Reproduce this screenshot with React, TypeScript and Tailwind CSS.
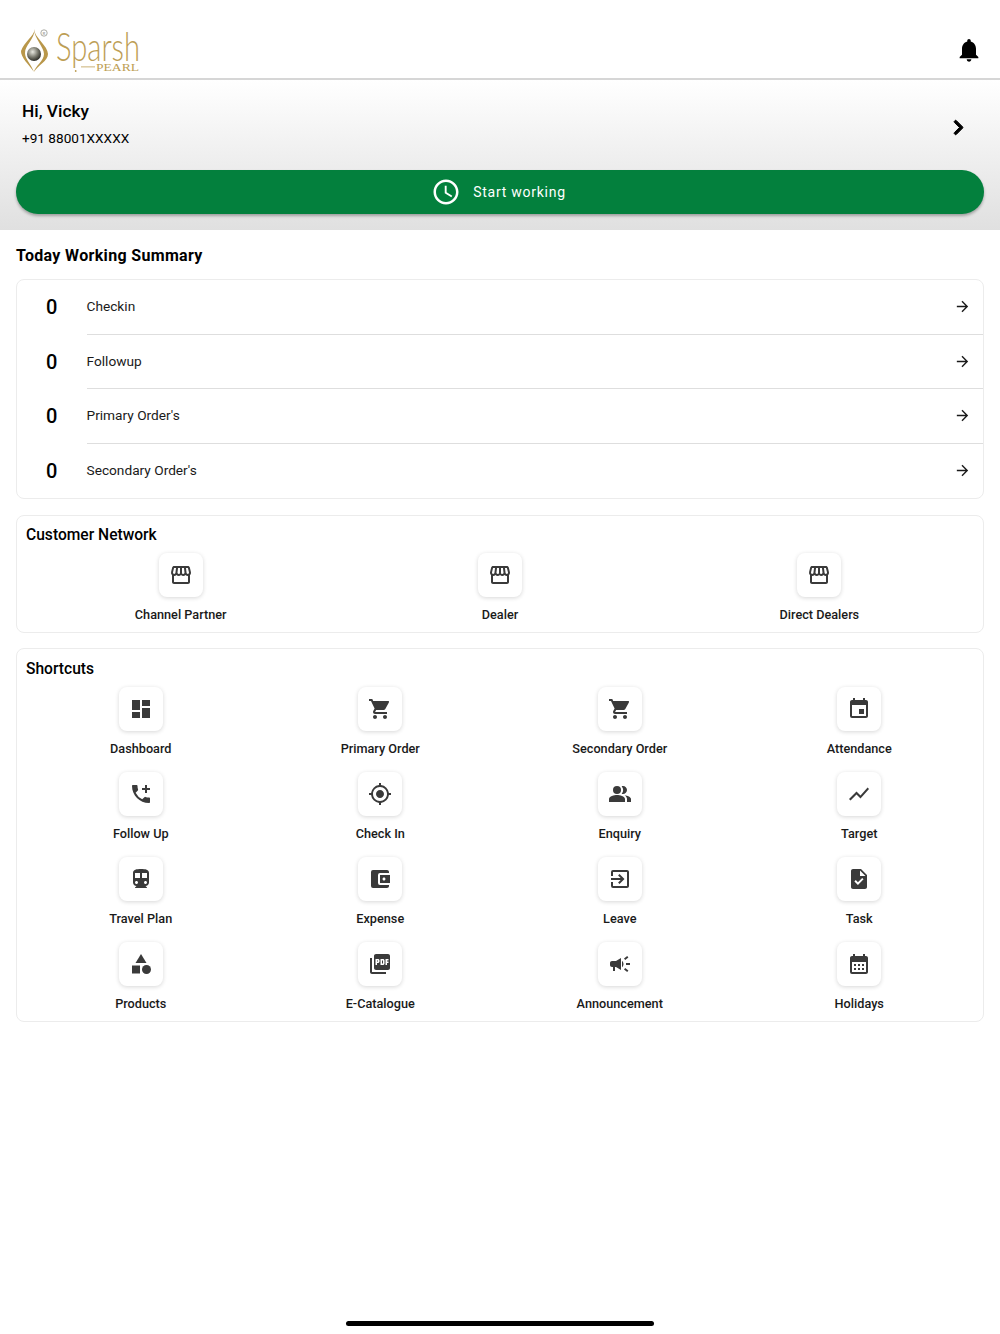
import React from 'react';
import { FaChevronRight } from 'react-icons/fa';
import {
  MdAccountBalanceWallet,
  MdAddIcCall,
  MdArrowForward,
  MdCalendarMonth,
  MdCampaign,
  MdCategory,
  MdDashboard,
  MdDirectionsSubway,
  MdEvent,
  MdGpsFixed,
  MdNotifications,
  MdOutlineAccessTime,
  MdOutlineExitToApp,
  MdOutlineStorefront,
  MdPeopleAlt,
  MdPictureAsPdf,
  MdShoppingCart,
  MdShowChart,
  MdTask,
} from 'react-icons/md';
import type { IconType } from 'react-icons';

type Tile = { label: string; icon: IconType };

const summary = ['Checkin', 'Followup', "Primary Order's", "Secondary Order's"];

const network: Tile[] = [
  { label: 'Channel Partner', icon: MdOutlineStorefront },
  { label: 'Dealer', icon: MdOutlineStorefront },
  { label: 'Direct Dealers', icon: MdOutlineStorefront },
];

const shortcuts: Tile[] = [
  { label: 'Dashboard', icon: MdDashboard },
  { label: 'Primary Order', icon: MdShoppingCart },
  { label: 'Secondary Order', icon: MdShoppingCart },
  { label: 'Attendance', icon: MdEvent },
  { label: 'Follow Up', icon: MdAddIcCall },
  { label: 'Check In', icon: MdGpsFixed },
  { label: 'Enquiry', icon: MdPeopleAlt },
  { label: 'Target', icon: MdShowChart },
  { label: 'Travel Plan', icon: MdDirectionsSubway },
  { label: 'Expense', icon: MdAccountBalanceWallet },
  { label: 'Leave', icon: MdOutlineExitToApp },
  { label: 'Task', icon: MdTask },
  { label: 'Products', icon: MdCategory },
  { label: 'E-Catalogue', icon: MdPictureAsPdf },
  { label: 'Announcement', icon: MdCampaign },
  { label: 'Holidays', icon: MdCalendarMonth },
];

const Logo = () => (
  <svg width="150" height="52" viewBox="0 -6 150 52" className="block">
    <defs>
      <radialGradient id="pearl" cx="40%" cy="35%" r="70%">
        <stop offset="0%" stopColor="#e8e8e0" />
        <stop offset="55%" stopColor="#77776c" />
        <stop offset="100%" stopColor="#22221e" />
      </radialGradient>
    </defs>
    <path d="M15 2 C14 9 4 15 1 24 C0.5 30 9 38 14 45 C11 37 5 32 5 26 C5 18 14 13 15 2Z" fill="#b9974a" />
    <path d="M14 2 C14 10 28 19 28 27 C28 34 18 38 14 45 C15 39 24 34 24 27 C24 20 14 11 14 2Z" fill="#b9974a" />
    <circle cx="14" cy="27" r="7" fill="url(#pearl)" />
    <circle cx="24" cy="6" r="3.2" fill="none" stroke="#8a8a80" strokeWidth="0.7" />
    <text x="24" y="7.7" textAnchor="middle" fontSize="4.6" fill="#8a8a80" fontFamily="Lato, sans-serif">R</text>
    <text x="36" y="34" fontSize="39" fontWeight="300" fill="#bd9e55" fontFamily="Lato, sans-serif" textLength="84" lengthAdjust="spacingAndGlyphs">Sparsh</text>
    <rect x="61" y="39.5" width="14" height="0.8" fill="#bd9e55" />
    <circle cx="55.7" cy="44" r="0.9" fill="#bd9e55" />
    <text x="76" y="44" fontSize="10.5" fill="#bd9e55" fontFamily="'Liberation Serif', serif" textLength="43" lengthAdjust="spacingAndGlyphs">PEARL</text>
  </svg>
);

const Tiles = ({ items, cols }: { items: Tile[]; cols: string }) => (
  <div className={`grid ${cols} gap-y-[13px] px-1 mt-[6px]`}>
    {items.map(({ label, icon: Icon }) => (
      <div key={label} className="flex flex-col items-center">
        <div className="flex h-11 w-11 items-center justify-center rounded-lg bg-white shadow-[0_1px_4px_rgba(0,0,0,0.16)]">
          <Icon size={24} color="#3a3a3a" />
        </div>
        <div className="mt-2 text-[12.7px] font-medium leading-5 text-[#1a1a1a]">{label}</div>
      </div>
    ))}
  </div>
);

export default function App() {
  return (
    <div className="flex h-[1334px] flex-col bg-white font-['Roboto',sans-serif] text-black">
      {/* top bar */}
      <header className="relative z-10 flex h-20 items-center justify-between border-b-2 border-[#d6d6d6] pr-[17px] pl-5 pt-4">
        <Logo />
        <MdNotifications size={28} color="#000" className="mt-[6px]" />
      </header>

      {/* greeting */}
      <section className="bg-gradient-to-b from-white to-[#e0e0e0] px-4 pt-[19px] pb-4">
        <div className="flex items-center justify-between pl-[6px] pr-[17px]">
          <div>
            <div className="text-[17.3px] leading-[24px] font-medium">Hi, Vicky</div>
            <div className="mt-[5px] text-[13.6px] leading-5">+91 88001XXXXX</div>
          </div>
          <FaChevronRight size={17} color="#000" stroke="#000" strokeWidth={30} className="mt-[7px]" />
        </div>
        <button className="mt-[22px] flex h-11 w-full items-center justify-center gap-3 rounded-full bg-[#03803d] pr-[3px] text-white shadow-[0_2px_3px_rgba(0,0,0,0.3)]">
          <MdOutlineAccessTime size={30} />
          <span className="text-sm tracking-[0.75px]">Start working</span>
        </button>
      </section>

      <main className="px-4">
        <h2 className="mt-[14px] text-base leading-6 font-bold tracking-[0.33px]">Today Working Summary</h2>

        <div className="mt-[11px] rounded-lg border border-[#ececec]">
          {summary.map((name, idx) => (
            <div key={name} className="flex h-[54.5px] items-center">
              <div className="w-[69.5px] text-center text-xl font-medium">0</div>
              <div className={`flex h-full flex-1 items-center justify-between pr-3 ${idx < 3 ? 'border-b border-[#dedede]' : ''}`}>
                <span className="text-[13.7px] text-[#1a1a1a]">{name}</span>
                <MdArrowForward size={17} color="#1a1a1a" />
              </div>
            </div>
          ))}
        </div>

        <div className="mt-4 rounded-lg border border-[#ececec] pt-[7px] pb-[7px]">
          <h3 className="pl-[9px] text-[15.6px] leading-6 font-medium">Customer Network</h3>
          <Tiles items={network} cols="grid-cols-3" />
        </div>

        <div className="mt-[15px] rounded-lg border border-[#ececec] pt-2 pb-[7px]">
          <h3 className="pl-[9px] text-[15.6px] leading-6 font-medium">Shortcuts</h3>
          <Tiles items={shortcuts} cols="grid-cols-4" />
        </div>
      </main>

      {/* home indicator */}
      <div className="mt-auto flex justify-center pb-2">
        <div className="h-[5px] w-[308px] rounded-full bg-black" />
      </div>
    </div>
  );
}
